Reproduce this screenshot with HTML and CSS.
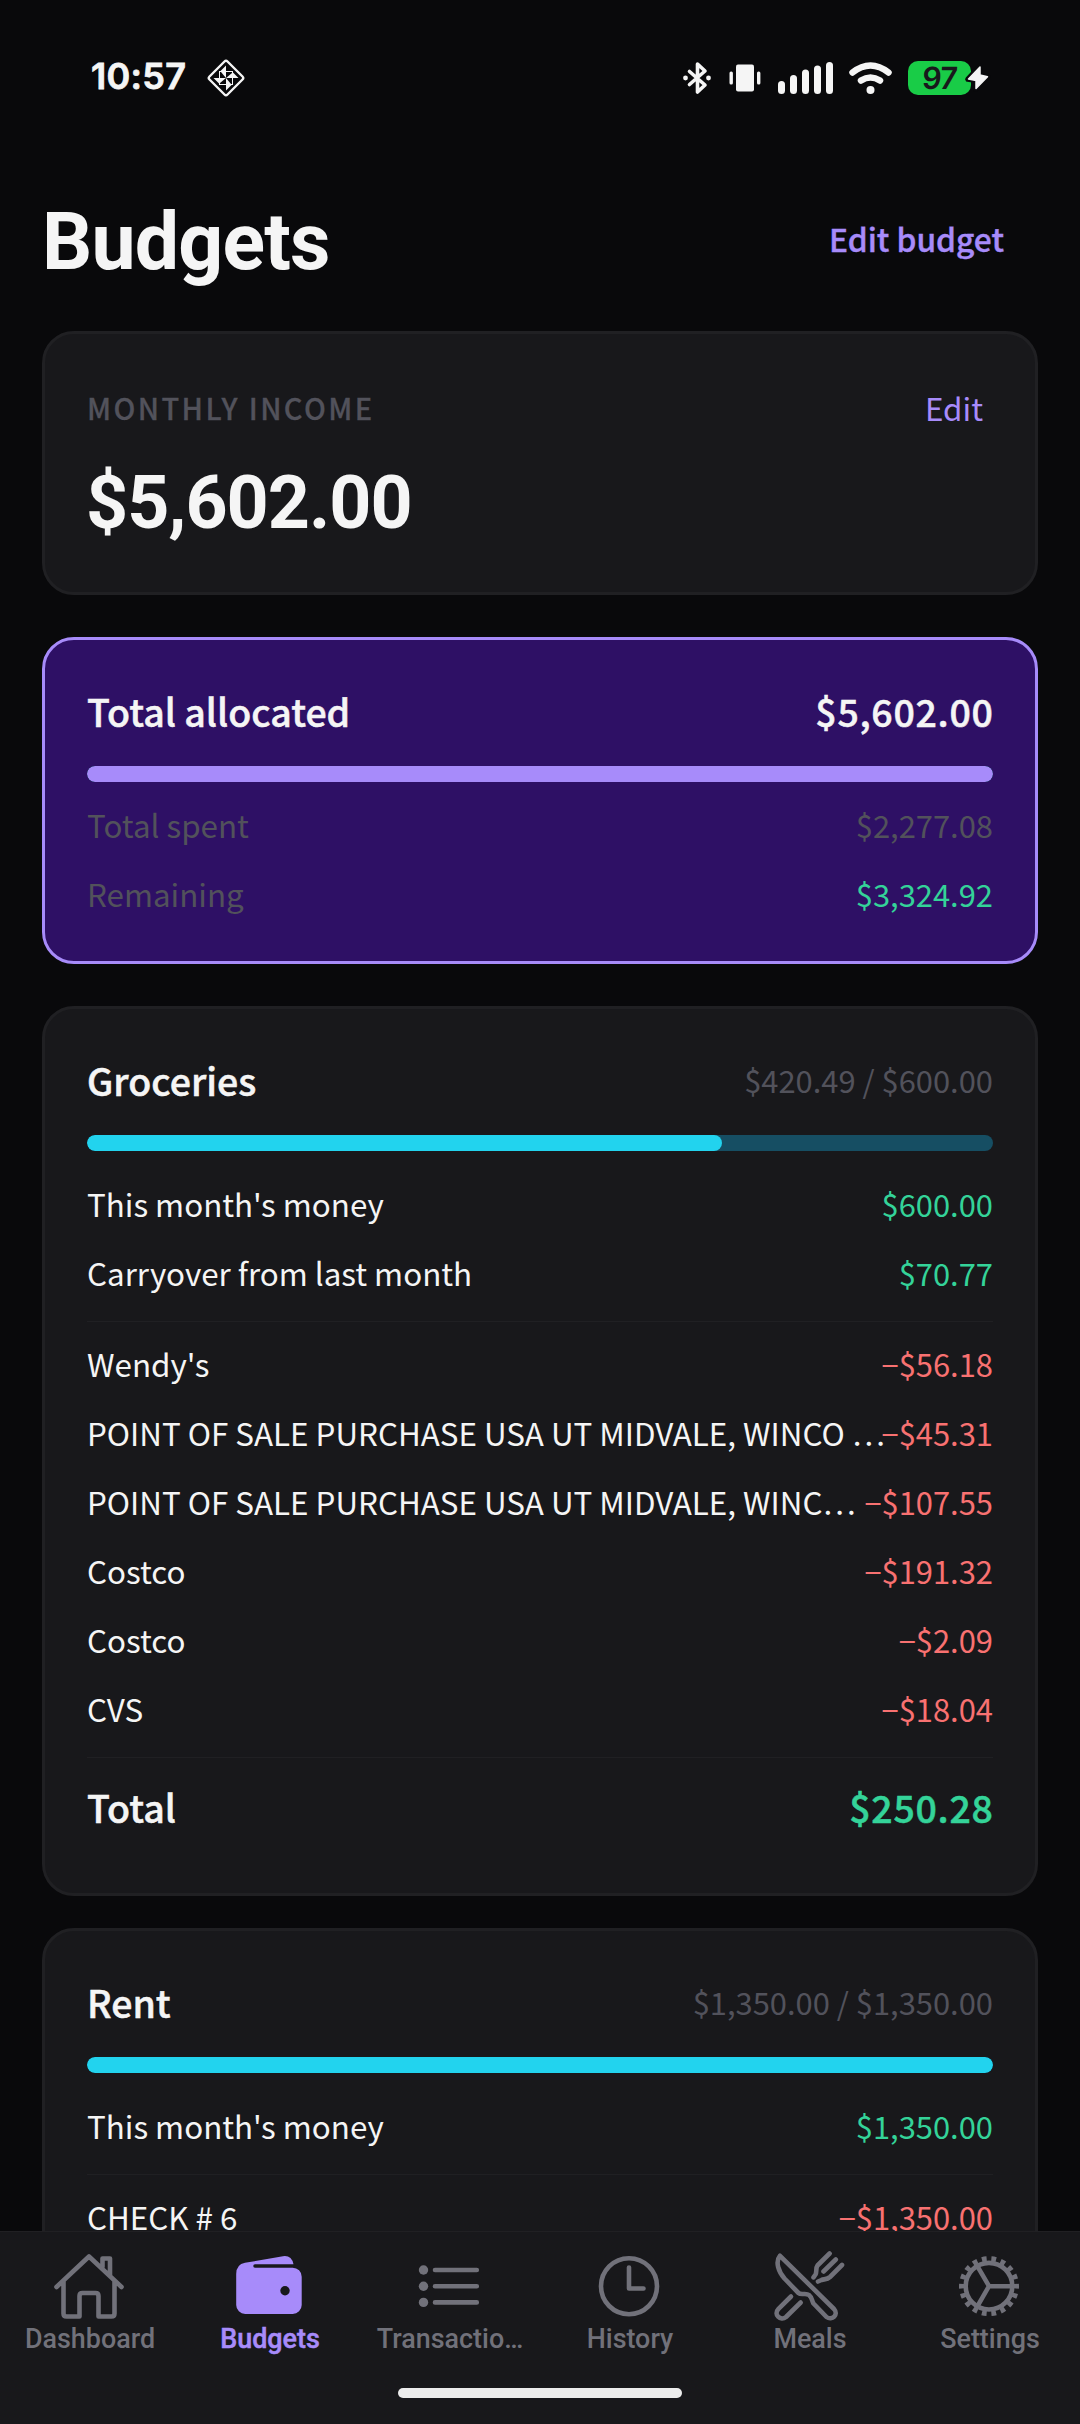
FILE: index.html
```html
<!DOCTYPE html>
<html lang="en">
<head>
    <meta charset="UTF-8">
    <meta name="viewport" content="width=device-width, initial-scale=1.0">
    <title>Budgets</title>
    <link rel="stylesheet" href="styles.css">
</head>
<body>
    <div class="status-bar">
        <div class="status-left">
            <span class="clock">10:57</span>
            <svg class="app-badge" width="40" height="40" viewBox="-20 -20 40 40">
                <path d="M-1.5 -16.5Q0 -18 1.5 -16.5L16.5 -1.5Q18 0 16.5 1.5L1.5 16.5Q0 18 -1.5 16.5L-16.5 1.5Q-18 0 -16.5 -1.5Z" fill="none" stroke="#f5f5f5" stroke-width="2.400"/>
                <g fill="#f5f5f5">
                    <path d="M-5.500 -7H0V-12.500ZM7 -5.500V0H12.500ZM5.500 7H0V12.500ZM-7 5.500V0H-12.500Z"/>
                    <path d="M0 0V-6L-5 -6ZM0 0H6V-5ZM0 0V6H5ZM0 0H-6V5Z"/>
                </g>
                <rect x="-6.500" y="-6.500" width="13" height="13" fill="none" stroke="#f5f5f5" stroke-width="1"/>
            </svg>
        </div>
        <div class="status-right">
            <svg width="28" height="34" viewBox="-14 -17 28 34">
                <path d="M-7.500 -6.500L8 7L0.500 14V-14L8 -7L-7.500 6.500" fill="none" stroke="#f5f5f5" stroke-width="3.600" stroke-linecap="round" stroke-linejoin="round"/>
                <circle cx="-11.500" cy="0" r="2.400" fill="#f5f5f5"/>
                <circle cx="11.500" cy="0" r="2.400" fill="#f5f5f5"/>
            </svg>
            <svg class="vibrate" width="32" height="34" viewBox="0 0 32 34" fill="#f5f5f5">
                <rect x="7" y="3.500" width="18" height="27" rx="2"/>
                <rect x="0.500" y="10.500" width="3.400" height="13" rx="1.500"/>
                <rect x="28" y="10.500" width="3.400" height="13" rx="1.500"/>
            </svg>
            <svg class="signal" width="56" height="34" viewBox="0 0 56 34" fill="#f5f5f5">
                <rect x="0" y="20" width="7" height="13" rx="3.500"/>
                <rect x="12" y="14" width="7" height="19" rx="3.500"/>
                <rect x="24" y="8.500" width="7" height="24.500" rx="3.500"/>
                <rect x="36" y="4.500" width="7" height="28.500" rx="3.500"/>
                <rect x="48" y="1" width="7" height="32" rx="3.500"/>
            </svg>
            <svg class="wifi" width="43" height="34" viewBox="0 0 43 34">
                <path d="M3.500 11.500Q21.500 -2.500 39.500 11.500M12 19.500Q21.500 13.500 31 19.500" fill="none" stroke="#f5f5f5" stroke-width="6.500" stroke-linecap="round"/>
                <circle cx="21.500" cy="29" r="4" fill="#f5f5f5"/>
            </svg>
            <svg class="battery" width="81" height="34" viewBox="0 0 81 34">
                <rect x="0" y="0" width="63" height="34" rx="10" fill="#19cc47"/>
                <path d="M72 5L59.700 18.300L67.500 19.500L67.500 28.300L80 15.500L72 14Z" fill="#09090b" stroke="#09090b" stroke-width="5" stroke-linejoin="round"/>
                <path d="M72 6L60.500 18L68 19.500L68 27.500L79.500 15.700L72 14Z" fill="#f5f5f5" stroke="#f5f5f5" stroke-width="1.500" stroke-linejoin="round"/>
                <text class="battery-level" x="15.500" y="28" transform="skewX(-4)">97</text>
            </svg>
        </div>
    </div>

    <div class="content">
        <div class="header">
            <h1>Budgets</h1>
            <a class="edit-budget">Edit budget</a>
        </div>

        <div class="card income">
            <div class="income-head">
                <span class="label">MONTHLY INCOME</span>
                <a class="edit">Edit</a>
            </div>
            <div class="income-amount">$5,602.00</div>
        </div>

        <div class="card allocated">
            <div class="title-row"><span>Total allocated</span><span class="amount">$5,602.00</span></div>
            <div class="bar"><div class="fill" style="width: 100%"></div></div>
            <div class="row muted"><span class="name">Total spent</span><span class="value">$2,277.08</span></div>
            <div class="row muted"><span class="name">Remaining</span><span class="value green">$3,324.92</span></div>
        </div>

        <div class="card budget">
            <div class="title-row"><span>Groceries</span><span class="spent">$420.49 / $600.00</span></div>
            <div class="bar"><div class="fill" style="width: 70.1%"></div></div>
            <div class="row"><span class="name">This month's money</span><span class="value green">$600.00</span></div>
            <div class="row"><span class="name">Carryover from last month</span><span class="value green">$70.77</span></div>
            <div class="divider"></div>
            <div class="row"><span class="name">Wendy's</span><span class="value red">−$56.18</span></div>
            <div class="row"><span class="name">POINT OF SALE PURCHASE USA UT MIDVALE, WINCO …</span><span class="value red">−$45.31</span></div>
            <div class="row"><span class="name">POINT OF SALE PURCHASE USA UT MIDVALE, WINC…</span><span class="value red">−$107.55</span></div>
            <div class="row"><span class="name">Costco</span><span class="value red">−$191.32</span></div>
            <div class="row"><span class="name">Costco</span><span class="value red">−$2.09</span></div>
            <div class="row"><span class="name">CVS</span><span class="value red">−$18.04</span></div>
            <div class="divider"></div>
            <div class="title-row total"><span>Total</span><span class="amount green">$250.28</span></div>
        </div>

        <div class="card budget">
            <div class="title-row"><span>Rent</span><span class="spent">$1,350.00 / $1,350.00</span></div>
            <div class="bar"><div class="fill" style="width: 100%"></div></div>
            <div class="row"><span class="name">This month's money</span><span class="value green">$1,350.00</span></div>
            <div class="divider"></div>
            <div class="row"><span class="name">CHECK # 6</span><span class="value red">−$1,350.00</span></div>
        </div>
    </div>

    <div class="bottom-nav">
        <div class="tabs">
            <div class="tab">
                <svg viewBox="0 0 72 72">
                    <path d="M3.500 37L36 6.500L68.500 37M10.500 31V63.500Q10.500 66.500 13.500 66.500H26.500V46Q26.500 43 29.500 43H42.500Q45.500 43 45.500 46V66.500H58.500Q61.500 66.500 61.500 63.500V31M49.500 17V8.500H57V25"/>
                </svg>
                <span>Dashboard</span>
            </div>
            <div class="tab active">
                <svg viewBox="0 0 72 72">
                    <path class="solid" d="M3.200 24Q3.200 14.500 12 12.800L50 6.200Q58.500 5 60.500 14.200H22A1.750 1.750 0 0 0 22 17.700H59.700A9 9 0 0 1 68.700 26.700V55A9 9 0 0 1 59.700 64H12.200A9 9 0 0 1 3.200 55Z"/>
                    <circle class="hole" cx="52" cy="40.700" r="4.700"/>
                </svg>
                <span>Budgets</span>
            </div>
            <div class="tab">
                <svg viewBox="0 0 72 72">
                    <path d="M22 20H63.800M22 36.200H63.800M22 52.400H63.800"/>
                    <circle class="solid" cx="10.500" cy="20" r="4.700"/>
                    <circle class="solid" cx="10.500" cy="36.200" r="4.700"/>
                    <circle class="solid" cx="10.500" cy="52.400" r="4.700"/>
                </svg>
                <span>Transactio…</span>
            </div>
            <div class="tab">
                <svg viewBox="0 0 72 72">
                    <circle cx="36" cy="36.200" r="28"/>
                    <path d="M36 17.500V38.500H50.500"/>
                </svg>
                <span>History</span>
            </div>
            <div class="tab">
                <svg viewBox="0 0 72 72">
                    <path d="M7 5.800L61 59C66 64.500 59 71 53.500 67L40.500 53.500C38.500 50 39.500 48 36 45C33 42.500 28 45.500 25.500 43L11.500 28.500C5.500 21.500 2 12 7 5.800Z"/>
                    <path d="M18 46.500L5.500 58.800C0 64.500 7.500 71.500 13 67L27.700 52.500"/>
                    <path d="M56.600 3.500L44.500 15.500C42.500 18 44 22 42.500 24.500L40.500 27.300M69 15L57 27C54 29.800 51 29 48.500 30L45 31.500M62.800 9.500L50.500 21.500"/>
                </svg>
                <span>Meals</span>
            </div>
            <div class="tab">
                <svg viewBox="0 0 72 72">
                    <circle cx="36" cy="36.200" r="23.300"/>
                    <circle class="teeth" cx="36" cy="36.200" r="27.500" pathLength="36"/>
                    <path d="M36 36.200H58M36 36.200L24.500 16.300M36 36.200L24.500 56.100"/>
                </svg>
                <span>Settings</span>
            </div>
        </div>
        <div class="home-indicator"></div>
    </div>
</body>
</html>
```
FILE: styles.css
```css
* {
    box-sizing: border-box;
}

body {
    margin: 0;
    height: 2424px;
    display: flex;
    flex-direction: column;
    overflow: hidden;
    background-color: #09090b;
    color: #f5f5f5;
    font-family: "Noto Sans CJK SC", "Noto Sans", sans-serif;
    font-size: 31.35px;
}

/* Status bar */
.status-bar {
    height: 155px;
    flex-shrink: 0;
    display: flex;
    align-items: center;
    justify-content: space-between;
    padding: 0 91px;
}

.status-left, .status-right {
    display: flex;
    align-items: center;
}

.clock {
    font: 600 36px "Inter", sans-serif;
    -webkit-text-stroke: 0.8px #f5f5f5;
    stroke-linejoin: round;
    letter-spacing: 0.3px;
    line-height: 40px;
    padding-bottom: 4px;
}

.app-badge {
    margin-left: 20px;
}

.vibrate {
    margin-left: 18px;
}

.signal {
    margin-left: 17px;
}

.wifi {
    margin-left: 15px;
}

.battery {
    margin-left: 16px;
    overflow: visible;
}

.battery-level {
    font: 600 30.5px "Inter", sans-serif;
    letter-spacing: -1.2px;
    fill: #18181b;
}

/* Header */
.content {
    flex: 1;
    min-height: 0;
    overflow: hidden;
    padding: 0 42px;
}

.header {
    height: 166px;
    margin-bottom: 10px;
    display: flex;
    align-items: center;
    justify-content: space-between;
}

h1 {
    margin: 0;
    padding-top: 8px;
    font: 700 78.75px/92px "Roboto", sans-serif;
    letter-spacing: -0.8px;
}

.edit-budget {
    padding-right: 34px;
    font-size: 31.7px;
    font-weight: 500;
    -webkit-text-stroke: 0.4px;
    color: #a78bfa;
}

/* Cards */
.card {
    background-color: #18181b;
    border: 3px solid #202023;
    border-radius: 32px;
    padding: 33px 42px;
    margin-bottom: 42px;
}

.income-head {
    height: 80px;
    display: flex;
    align-items: center;
    justify-content: space-between;
}

.label {
    font-size: 29px;
    font-weight: 500;
    letter-spacing: 2.4px;
    -webkit-text-stroke: 0.3px;
    color: #52525b;
}

.edit {
    padding-right: 10px;
    color: #a78bfa;
}

.income-amount {
    font: 700 73.5px/112px "Roboto", sans-serif;
    letter-spacing: -1px;
    margin-left: -1px;
}

.allocated {
    background-color: #2e1065;
    border-color: #a78bfa;
}

.budget {
    margin-bottom: 32px;
}

.title-row {
    display: flex;
    align-items: center;
    justify-content: space-between;
    font-size: 37.5px;
    font-weight: 500;
    line-height: 75px;
    -webkit-text-stroke: 0.5px;
}

.amount {
    letter-spacing: 0.7px;
    margin-right: -0.6px;
}

.spent {
    font-size: 30.9px;
    font-weight: 400;
    -webkit-text-stroke: 0;
    color: #52525b;
}

.bar {
    height: 16px;
    margin: 18px 0;
    border-radius: 8px;
    background-color: #164e63;
    overflow: hidden;
}

.fill {
    height: 100%;
    border-radius: 8px;
    background-color: #22d3ee;
}

.allocated .bar {
    margin-bottom: 8px;
}

.allocated .fill {
    background-color: #a78bfa;
}

.row {
    display: flex;
    justify-content: space-between;
    line-height: 69px;
    white-space: nowrap;
}

.name {
    min-width: 0;
}

.value {
    flex-shrink: 0;
    font-size: 30.9px;
}

.muted {
    color: #52525b;
}

.green {
    color: #34d399;
}

.red {
    color: #f87171;
}

.divider {
    height: 1px;
    margin: 14px 0 7px;
    background-color: #202023;
}

.total {
    line-height: 83px;
    margin-bottom: 12px;
}

/* Bottom navigation */
.bottom-nav {
    height: 193px;
    flex-shrink: 0;
    background-color: #18181b;
    border-top: 1px solid #202023;
}

.tabs {
    display: flex;
    height: 156px;
    padding-top: 18px;
}

.tab {
    flex: 1;
    display: flex;
    flex-direction: column;
    align-items: center;
    font: 500 26.9px/32px "Roboto", sans-serif;
    color: #71717a;
}

.tab svg {
    width: 72px;
    height: 72px;
    margin-right: 2px;
    fill: none;
    stroke: currentColor;
    stroke-width: 4.6;
    stroke-linecap: round;
    stroke-linejoin: round;
}

.tab .solid {
    fill: currentColor;
    stroke: none;
}

.tab .hole {
    fill: #18181b;
    stroke: none;
}

.tab .teeth {
    stroke-width: 5;
    stroke-linecap: butt;
    stroke-dasharray: 1 1;
    stroke-dashoffset: 0.5;
}

.tab span {
    margin-top: 1px;
}

.tab.active {
    color: #a78bfa;
}

.tab.active span {
    -webkit-text-stroke: 0.5px;
}

.home-indicator {
    width: 284px;
    height: 10px;
    margin: 0 auto;
    border-radius: 5px;
    background-color: #ececec;
}
```
